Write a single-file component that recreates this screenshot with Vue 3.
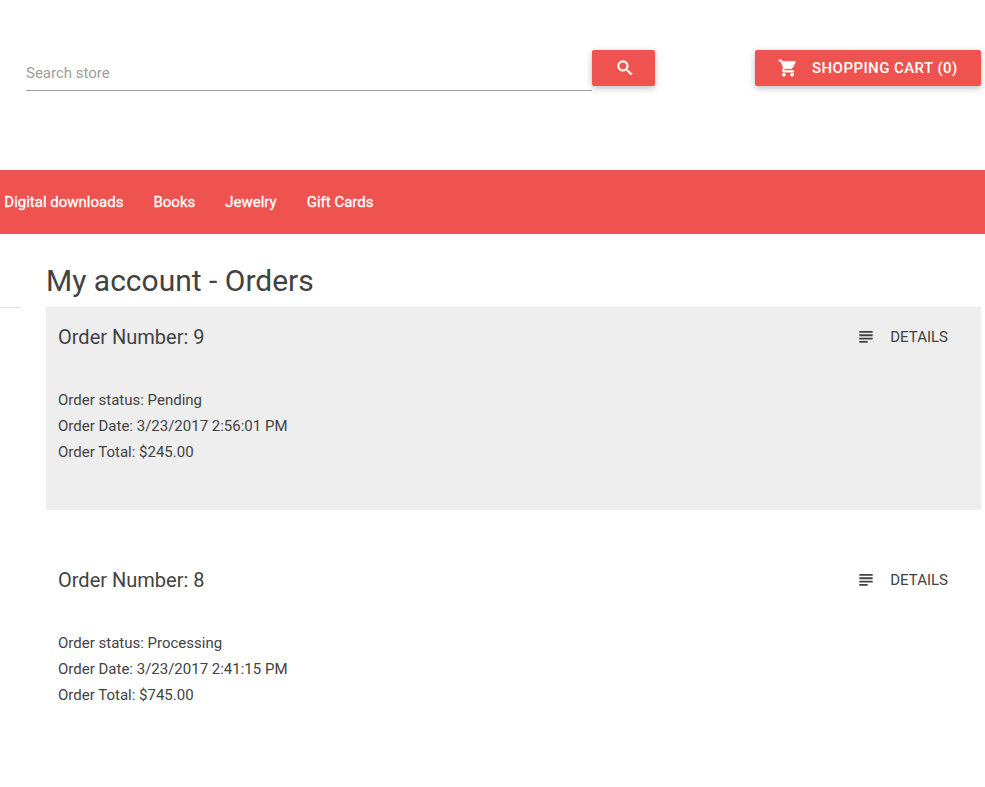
<script setup>
const categories = ['Digital downloads', 'Books', 'Jewelry', 'Gift Cards']
const orders = [
  { id: 9, status: 'Pending', date: '3/23/2017 2:56:01 PM', total: '$245.00' },
  { id: 8, status: 'Processing', date: '3/23/2017 2:41:15 PM', total: '$745.00' }
]
</script>

<template>
  <div class="page">
    <header class="header">
      <input class="search" type="text" placeholder="Search store" />
      <button class="btn btn-search" aria-label="Search">
        <svg width="20" height="20" viewBox="0 0 24 24"><path d="M15.5 14h-.79l-.28-.27A6.471 6.471 0 0 0 16 9.5 6.5 6.5 0 1 0 9.500 16c1.610 0 3.090-.590 4.230-1.570l.270.280v.790l5 4.990L20.490 19l-4.990-5zm-6 0C7.010 14 5 11.990 5 9.500S7.010 5 9.500 5 14 7.010 14 9.500 11.990 14 9.500 14z" /></svg>
      </button>
      <button class="btn btn-cart">
        <svg width="20" height="20" viewBox="0 0 24 24"><path d="M7 18c-1.100 0-1.990.900-1.990 2S5.900 22 7 22s2-.900 2-2-.900-2-2-2zM1 2v2h2l3.600 7.590-1.350 2.450c-.160.280-.250.610-.250.960 0 1.100.900 2 2 2h12v-2H7.420c-.140 0-.250-.110-.250-.250l.030-.120.900-1.630h7.450c.750 0 1.410-.410 1.750-1.030l3.580-6.490A1.003 1.003 0 0 0 20 4H5.210l-.940-2H1zm16 16c-1.100 0-1.990.900-1.990 2s.890 2 1.990 2 2-.900 2-2-.900-2-2-2z" /></svg>
        <span>SHOPPING CART (0)</span>
      </button>
    </header>
    <nav class="nav">
      <a v-for="name in categories" :key="name">{{ name }}</a>
    </nav>
    <div class="content">
      <aside class="side"></aside>
      <main class="main">
        <h1>My account - Orders</h1>
        <section v-for="order in orders" :key="order.id" class="order">
          <div class="order-head">
            <h2>Order Number: {{ order.id }}</h2>
            <a class="details">
              <svg width="20" height="20" viewBox="0 0 24 24"><path d="M4 4.800h16v2.200H4zm0 4h16v2.200H4zm0 4h16v2.200H4zm0 4h10v2.200H4z" /></svg>
              <span>DETAILS</span>
            </a>
          </div>
          <ul>
            <li>Order status: {{ order.status }}</li>
            <li>Order Date: {{ order.date }}</li>
            <li>Order Total: {{ order.total }}</li>
          </ul>
        </section>
      </main>
    </div>
  </div>
</template>

<style>
body {
  background: #fff;
  overflow: hidden;
}
</style>

<style scoped>
.page {
  height: 787px;
  overflow: hidden;
  font-family: Roboto, "Liberation Sans", sans-serif;
  font-size: 15px;
  color: #424242;
}
.page * {
  box-sizing: border-box;
}
svg {
  display: block;
  flex: none;
  fill: currentColor;
}
.header {
  display: flex;
  align-items: flex-start;
  height: 170px;
  padding: 50px 4px 0 26px;
}
.search {
  width: 566px;
  height: 41px;
  margin: 0;
  padding: 6px 0 0;
  border: 0;
  border-bottom: 1px solid #9e9e9e;
  outline: 0;
  background: transparent;
  font: inherit;
}
.search::placeholder {
  color: #9e9e9e;
  opacity: 1;
}
.btn {
  display: flex;
  align-items: center;
  height: 36px;
  margin: 0;
  border: 0;
  border-radius: 2px;
  background: #ef5350;
  color: #fff;
  font: 500 15px Roboto, "Liberation Sans", sans-serif;
  letter-spacing: .44px;
  box-shadow: 0 2px 5px 0 rgba(0, 0, 0, .16), 0 2px 10px 0 rgba(0, 0, 0, .12);
}
.btn-search {
  justify-content: center;
  width: 63px;
  padding: 0 0 0 2px;
}
.btn-search svg {
  stroke: currentColor;
  stroke-width: .6;
}
.btn-cart {
  width: 226px;
  margin-left: auto;
  padding: 0 0 0 23px;
  gap: 14px;
  white-space: nowrap;
}
.btn-cart svg {
  stroke: currentColor;
  stroke-width: .5;
}
.nav {
  display: flex;
  align-items: center;
  gap: 30px;
  height: 64px;
  padding-left: 4.3px;
  background: #ef5350;
  color: #fff;
  -webkit-text-stroke: .3px #fff;
}
.content {
  display: flex;
}
.side {
  width: 21px;
  height: 74px;
  border-bottom: 1px solid #e0e0e0;
}
.main {
  flex: 1;
  padding: 26px 4px 0 25px;
}
h1 {
  height: 47px;
  margin: 0;
  font-size: 30px;
  font-weight: 400;
  line-height: 42px;
}
.order {
  height: 203px;
  margin-bottom: 40px;
  padding: 12px;
}
.order:nth-of-type(odd) {
  background: #eee;
}
.order-head {
  display: flex;
  align-items: center;
  justify-content: space-between;
  height: 36px;
}
h2 {
  margin: 0;
  font-size: 20px;
  font-weight: 400;
}
.details {
  display: flex;
  align-items: center;
  gap: 14px;
  padding-right: 21px;
}
ul {
  margin: 32px 0 0;
  padding: 0;
  list-style: none;
}
li {
  line-height: 26px;
}
</style>
